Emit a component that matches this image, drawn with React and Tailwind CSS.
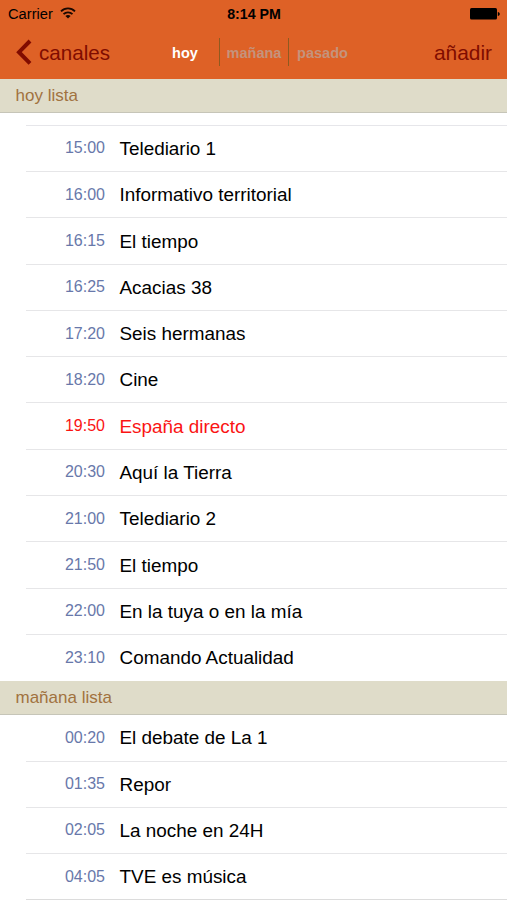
import { useState } from "react";

const today = [
  { time: "15:00", title: "Telediario 1" },
  { time: "16:00", title: "Informativo territorial" },
  { time: "16:15", title: "El tiempo" },
  { time: "16:25", title: "Acacias 38" },
  { time: "17:20", title: "Seis hermanas" },
  { time: "18:20", title: "Cine" },
  { time: "19:50", title: "España directo", live: true },
  { time: "20:30", title: "Aquí la Tierra" },
  { time: "21:00", title: "Telediario 2" },
  { time: "21:50", title: "El tiempo" },
  { time: "22:00", title: "En la tuya o en la mía" },
  { time: "23:10", title: "Comando Actualidad" },
];

const tomorrow = [
  { time: "00:20", title: "El debate de La 1" },
  { time: "01:35", title: "Repor" },
  { time: "02:05", title: "La noche en 24H" },
  { time: "04:05", title: "TVE es música" },
];

function StatusBar() {
  return (
    <div className="grid h-[27px] grid-cols-3 items-center pl-2 pr-[7px] text-black">
      <div className="flex items-center gap-[7px]">
        <span className="pt-[2px] text-[14.7px] leading-none">Carrier</span>
        <svg width="16" height="12" viewBox="0 0 16 12" fill="none" stroke="#1a0800" strokeWidth="1.8">
          <path d="M1 4.4C4.9 .4 11.1 .4 15 4.4" />
          <path d="M3.5 7.2C6 4.7 10 4.7 12.5 7.2" />
          <path d="M8 11.6L5.4 9C6.9 7.7 9.1 7.7 10.6 9Z" fill="#1a0800" stroke="none" />
        </svg>
      </div>
      <span className="pt-[2px] text-center text-[14.2px] leading-none font-bold">8:14 PM</span>
      <svg className="justify-self-end" width="30" height="12" viewBox="0 0 30 12">
        <rect width="27" height="11.5" rx="1.5" />
        <path d="M27.8 4C30.4 4.3 30.4 7.6 27.8 8Z" />
      </svg>
    </div>
  );
}

function NavBar({ day, setDay }) {
  const tab = (name) => (day === name ? "text-white" : "text-[#c4937c]");

  return (
    <div className="flex h-[52px] items-start justify-between pl-4 pr-[15px] pt-[11px] text-[#800c00]">
      <button className="flex h-7 w-[134px] items-center gap-[7px] text-[20.6px] leading-7">
        <svg width="16" height="26" viewBox="0 0 16 26" fill="none" stroke="currentColor" strokeWidth="4">
          <path d="M14 2L3 13.2L14 24.4" />
        </svg>
        <span className="pt-[2px]">canales</span>
      </button>
      <div className="flex h-7 flex-1 text-[14.5px] leading-[30px] font-bold">
        <button onClick={() => setDay("hoy")} className={`w-[70px] border-r border-[#8f5a20] pl-px ${tab("hoy")}`}>
          hoy
        </button>
        <button onClick={() => setDay("mañana")} className={`w-[69px] border-r border-[#8f5a20] ${tab("mañana")}`}>
          mañana
        </button>
        <button onClick={() => setDay("pasado")} className={`w-[67px] ${tab("pasado")}`}>
          pasado
        </button>
      </div>
      <button className="pt-px text-[20.9px] leading-7">añadir</button>
    </div>
  );
}

function SectionHeader({ children }) {
  return (
    <h2 className="h-[34px] border-b border-[#c6c5b8] bg-[#dfdcc9] pl-[15.5px] text-[17px] leading-[33px] text-[#a1723f]">
      {children}
    </h2>
  );
}

function Programs({ items }) {
  return (
    <ul>
      {items.map((item) => (
        <li
          key={item.time}
          className="ml-[26px] flex h-[46.3px] items-center border-b border-[#e6e6e8] last:border-transparent"
        >
          <span className={`w-[79px] text-right text-[16px] ${item.live ? "text-[#fa1414]" : "text-[#6878aa]"}`}>
            {item.time}
          </span>
          <span className={`ml-[14.5px] pt-[1.5px] text-[18.9px] ${item.live ? "text-[#fa1414]" : "text-black"}`}>
            {item.title}
          </span>
        </li>
      ))}
    </ul>
  );
}

export default function App() {
  const [day, setDay] = useState("hoy");

  return (
    <div className="h-[900px] w-[507px] overflow-hidden bg-white font-['Liberation_Sans',Arial,sans-serif]">
      <header className="bg-[#de6126]">
        <StatusBar />
        <NavBar day={day} setDay={setDay} />
      </header>
      <SectionHeader>hoy lista</SectionHeader>
      <div className="ml-[26px] h-[12.7px] border-b border-[#e6e6ea]" />
      <Programs items={today} />
      <SectionHeader>mañana lista</SectionHeader>
      <Programs items={tomorrow} />
      <div className="ml-[26px] -mt-px h-px bg-[#dcdcdc]" />
    </div>
  );
}
